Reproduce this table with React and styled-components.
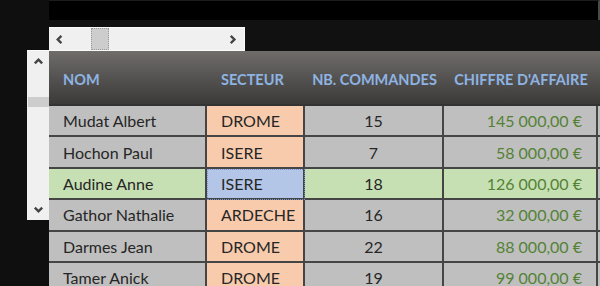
import React from "react";
import styled, { createGlobalStyle } from "styled-components";

const rows = [
    { name: "Mudat Albert", secteur: "DROME", nb: 15, ca: "145 000,00 €" },
    { name: "Hochon Paul", secteur: "ISERE", nb: 7, ca: "58 000,00 €" },
    { name: "Audine Anne", secteur: "ISERE", nb: 18, ca: "126 000,00 €", selected: true },
    { name: "Gathor Nathalie", secteur: "ARDECHE", nb: 16, ca: "32 000,00 €" },
    { name: "Darmes Jean", secteur: "DROME", nb: 22, ca: "88 000,00 €" },
    { name: "Tamer Anick", secteur: "DROME", nb: 19, ca: "99 000,00 €" },
];

const Chevron = ({ dir }) => {
    const pts = {
        left: "7,2 3,6 7,10",
        right: "3,2 7,6 3,10",
        up: "2,7 6,3 10,7",
        down: "2,4 6,8 10,4",
    };
    return (
        <svg width="11" height="11" viewBox="0 0 12 12">
            <polyline points={pts[dir]} fill="none" stroke="#444" strokeWidth="2.6" />
        </svg>
    );
};

const App = () => {
    return (
        <>
            <GlobalStyle />
            <Page>
                <Gutter>
                    <VScroll>
                        <ArrowBox>
                            <Chevron dir="up" />
                        </ArrowBox>
                        <VTrack>
                            <VThumb />
                        </VTrack>
                        <ArrowBox>
                            <Chevron dir="down" />
                        </ArrowBox>
                    </VScroll>
                </Gutter>
                <Main>
                    <TopBand />
                    <Toolbar>
                        <HScroll>
                            <HArrow>
                                <Chevron dir="left" />
                            </HArrow>
                            <HTrack>
                                <HThumb />
                            </HTrack>
                            <HArrow>
                                <Chevron dir="right" />
                            </HArrow>
                        </HScroll>
                    </Toolbar>
                    <Table>
                        <HeaderRow>
                            <HeadCell>NOM</HeadCell>
                            <HeadCell>SECTEUR</HeadCell>
                            <HeadCell $center>NB. COMMANDES</HeadCell>
                            <HeadCell $center>CHIFFRE D'AFFAIRE</HeadCell>
                            <HeadCell />
                        </HeaderRow>
                        {rows.map((r) => (
                            <Row key={r.name}>
                                <Cell $bg={r.selected ? "#c6e0b4" : "#bfbfbf"}>{r.name}</Cell>
                                <Cell $bg={r.selected ? "#b4c6e7" : "#f8cbad"} $focus={r.selected}>
                                    {r.secteur}
                                </Cell>
                                <Cell $bg={r.selected ? "#c6e0b4" : "#bfbfbf"} $align="center">
                                    {r.nb}
                                </Cell>
                                <Cell
                                    $bg={r.selected ? "#c6e0b4" : "#bfbfbf"}
                                    $align="flex-end"
                                    $color="#548235"
                                >
                                    {r.ca}
                                </Cell>
                                <Cell $bg="#bfbfbf" />
                            </Row>
                        ))}
                    </Table>
                </Main>
            </Page>
        </>
    );
};

const GlobalStyle = createGlobalStyle`
    body {
        margin: 0;
        background: #0f0f0f;
        font-family: Lato, "Open Sans", sans-serif;
    }
`;

const Page = styled.div`
    display: flex;
    width: 600px;
    height: 286px;
    overflow: hidden;
    background: #0f0f0f;
`;

const Gutter = styled.div`
    width: 49px;
    flex-shrink: 0;
    padding: 50px 0 0 27px;
    box-sizing: border-box;
    position: relative;
    z-index: 2;
`;

const VScroll = styled.div`
    width: 22px;
    height: 170px;
    background: #f0f0f0;
    border-top: 1px solid #fafafa;
    display: flex;
    flex-direction: column;
    box-sizing: border-box;
`;

const ArrowBox = styled.div`
    height: 22px;
    flex-shrink: 0;
    display: flex;
    align-items: center;
    justify-content: center;
`;

const VTrack = styled.div`
    flex: 1;
    padding-top: 24px;
`;

const VThumb = styled.div`
    height: 10px;
    background: #cdcdcd;
    margin-left: 1px;
`;

const Main = styled.div`
    flex: 1;
    display: flex;
    flex-direction: column;
    min-width: 0;
    & > * {
        flex-shrink: 0;
    }
`;

const TopBand = styled.div`
    height: 20px;
    background: #000;
    border-top: 1px solid #1c1c1c;
    border-right: 2px solid #4a4a4a;
    box-sizing: border-box;
`;

const Toolbar = styled.div`
    height: 31px;
    background: #111;
    padding-top: 7px;
    box-sizing: border-box;
`;

const HScroll = styled.div`
    width: 196px;
    height: 24px;
    background: #f0f0f0;
    border: 1px solid #fafafa;
    border-left: none;
    box-sizing: border-box;
    display: flex;
    align-items: stretch;
`;

const HArrow = styled.div`
    width: 22px;
    display: flex;
    align-items: center;
    justify-content: center;
`;

const HTrack = styled.div`
    flex: 1;
    padding-left: 20px;
`;

const HThumb = styled.div`
    width: 18px;
    height: 100%;
    background: #cdcdcd;
    outline: 1px dotted #9a9a9a;
    outline-offset: -1px;
`;

const Table = styled.div`
    display: flex;
    flex-direction: column;
    & > * {
        flex-shrink: 0;
    }
`;

const cols = "158px 98px 139px 154px 1fr";

const HeaderRow = styled.div`
    display: grid;
    grid-template-columns: ${cols};
    height: 55px;
    background: linear-gradient(#6f6c6a, #3b3a39);
    border-bottom: 2px solid #333;
    box-sizing: border-box;
`;

const HeadCell = styled.div`
    display: flex;
    align-items: center;
    justify-content: ${(p) => (p.$center ? "center" : "flex-start")};
    padding: 3px 14px 0;
    color: #8eb4e3;
    font-weight: 700;
    font-size: 14.5px;
    white-space: nowrap;
`;

const Row = styled.div`
    display: grid;
    grid-template-columns: ${cols};
    height: 31.4px;
    background: #454545;
`;

const Cell = styled.div`
    display: flex;
    align-items: center;
    justify-content: ${(p) => p.$align || "flex-start"};
    padding: 0 14px;
    background: ${(p) => p.$bg};
    color: ${(p) => p.$color || "#262626"};
    font-size: 16px;
    border-right: 2px solid #454545;
    border-bottom: 2px solid #454545;
    outline: ${(p) => (p.$focus ? "1px dotted #7a95c8" : "none")};
    outline-offset: -1px;
    box-sizing: border-box;
    white-space: nowrap;
    &:last-child {
        border-right: none;
    }
`;

export default App;
